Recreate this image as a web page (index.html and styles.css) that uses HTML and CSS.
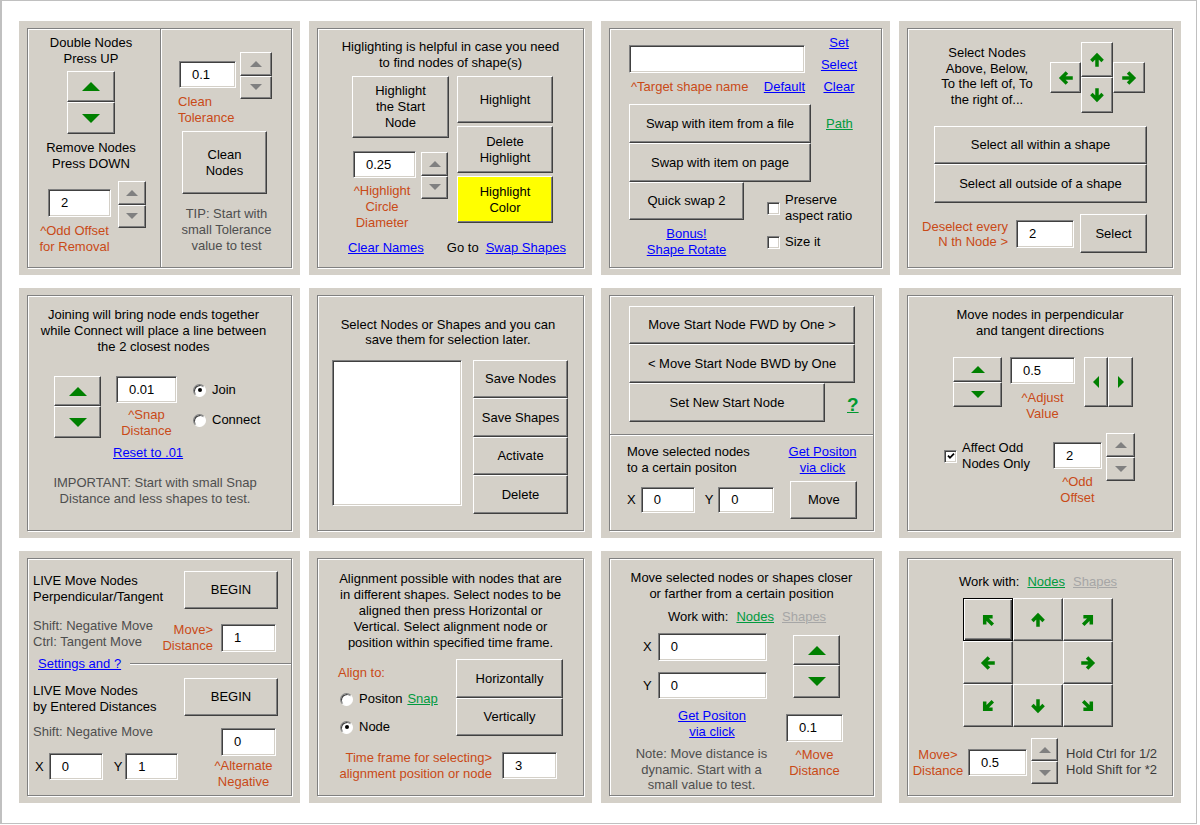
FILE: index.html
```html
<!DOCTYPE html>
<html lang="en">
<head>
<meta charset="utf-8">
<title>Node Tools</title>
<link rel="stylesheet" href="styles.css">
</head>
<body>
<div class="page">
<div class="grid">

<!-- 1 Double / Clean nodes -->
<section class="panel">
 <div class="frame p1">
  <div class="p1-left">
   <div class="nowrap center">Double Nodes<br>Press UP</div>
   <div class="p1-ud">
    <div class="btn p1-up"><span class="tu-l"></span></div>
    <div class="btn p1-dn"><span class="td-l"></span></div>
   </div>
   <div class="nowrap center p1-remove">Remove Nodes<br>Press DOWN</div>
   <div class="p1-offset">
    <div class="stack p1-stack">
     <div class="tb p1-tb-off">2</div>
     <div class="orange center nowrap p1-lbl-off">^Odd Offset<br>for Removal</div>
    </div>
    <div class="spin p1-spin-off">
     <div class="btn"><span class="tu-g"></span></div>
     <div class="btn"><span class="td-g"></span></div>
    </div>
   </div>
  </div>
  <div class="p1-right">
   <div class="p1-tol">
    <div class="stack-l p1-stack-tol">
     <div class="tb p1-tb-tol">0.1</div>
     <div class="orange nowrap p1-lbl-tol">Clean<br>Tolerance</div>
    </div>
    <div class="spin p1-spin-tol">
     <div class="btn"><span class="tu-g"></span></div>
     <div class="btn"><span class="td-g"></span></div>
    </div>
   </div>
   <div class="btn p1-clean">Clean<br>Nodes</div>
   <div class="gray center nowrap p1-tip">TIP: Start with<br>small Tolerance<br>value to test</div>
  </div>
 </div>
</section>

<!-- 2 Highlighting -->
<section class="panel">
 <div class="frame p2">
  <div class="center nowrap p2-head">Higlighting is helpful in case you need<br>to find nodes of shape(s)</div>
  <div class="p2-main">
   <div class="p2-left">
    <div class="btn p2-start">Highlight<br>the Start<br>Node</div>
    <div class="p2-dia">
     <div class="stack p2-stack">
      <div class="tb p2-tb">0.25</div>
      <div class="orange center nowrap p2-lbl">^Highlight<br>Circle<br>Diameter</div>
     </div>
     <div class="spin p2-spin">
      <div class="btn"><span class="tu-g"></span></div>
      <div class="btn"><span class="td-g"></span></div>
     </div>
    </div>
   </div>
   <div class="p2-right">
    <div class="btn p2-b">Highlight</div>
    <div class="btn p2-b">Delete<br>Highlight</div>
    <div class="btn p2-b yellow">Highlight<br>Color</div>
   </div>
  </div>
  <div class="p2-links nowrap">
   <a class="lnk" href="#">Clear Names</a>
   <span class="p2-goto">Go to</span>
   <a class="lnk p2-swap" href="#">Swap Shapes</a>
  </div>
 </div>
</section>

<!-- 3 Swap shapes -->
<section class="panel">
 <div class="frame p3">
  <div class="p3-top">
   <div class="p3-name">
    <div class="tb p3-tb"></div>
    <div class="p3-namerow nowrap">
     <span class="orange">^Target shape name</span>
     <a class="lnk" href="#">Default</a>
    </div>
   </div>
   <div class="p3-links">
    <a class="lnk" href="#">Set</a>
    <a class="lnk" href="#">Select</a>
    <a class="lnk" href="#">Clear</a>
   </div>
  </div>
  <div class="p3-row1">
   <div class="btn p3-wide nowrap">Swap with item from a file</div>
   <a class="glnk p3-path" href="#">Path</a>
  </div>
  <div class="btn p3-wide p3-page nowrap">Swap with item on page</div>
  <div class="p3-row3">
   <div class="p3-quick">
    <div class="btn p3-qs">Quick swap 2</div>
    <div class="center nowrap p3-bonus"><a class="lnk" href="#">Bonus!</a><br><a class="lnk" href="#">Shape Rotate</a></div>
   </div>
   <div class="p3-checks">
    <div class="chkrow"><span class="chk"></span><span class="nowrap">Preserve<br>aspect ratio</span></div>
    <div class="chkrow p3-size"><span class="chk"></span><span class="nowrap">Size it</span></div>
   </div>
  </div>
 </div>
</section>

<!-- 4 Select nodes -->
<section class="panel">
 <div class="frame p4">
  <div class="p4-top">
   <div class="center nowrap p4-desc">Select Nodes<br>Above, Below,<br>To the left of, To<br>the right of...</div>
   <div class="p4-cross">
    <div class="btn p4-side"><svg class="arr a-l" viewBox="0 0 12 12"><path d="M6 11.8V2M1.2 6.8 6 2l4.8 4.8"/></svg></div>
    <div class="p4-mid">
     <div class="btn p4-up"><svg class="arr" viewBox="0 0 12 12"><path d="M6 11.8V2M1.2 6.8 6 2l4.8 4.8"/></svg></div>
     <div class="btn p4-dn"><svg class="arr a-d" viewBox="0 0 12 12"><path d="M6 11.8V2M1.2 6.8 6 2l4.8 4.8"/></svg></div>
    </div>
    <div class="btn p4-side p4-right"><svg class="arr a-r" viewBox="0 0 12 12"><path d="M6 11.8V2M1.2 6.8 6 2l4.8 4.8"/></svg></div>
   </div>
  </div>
  <div class="btn p4-sel nowrap">Select all within a shape</div>
  <div class="btn p4-sel p4-sel2 nowrap">Select all outside of a shape</div>
  <div class="p4-bottom">
   <div class="orange nowrap p4-lbl">Deselect every<br>N th Node &gt;</div>
   <div class="tb p4-tb">2</div>
   <div class="btn p4-selbtn">Select</div>
  </div>
 </div>
</section>

<!-- 5 Join / Connect -->
<section class="panel">
 <div class="frame p5">
  <div class="center nowrap p5-head">Joining will bring node ends together<br>while Connect will place a line between<br>the 2 closest nodes</div>
  <div class="p5-mid">
   <div class="p5-ud">
    <div class="btn p5-up"><span class="tu-l"></span></div>
    <div class="btn p5-dn"><span class="td-l"></span></div>
   </div>
   <div class="stack p5-stack">
    <div class="tb p5-tb">0.01</div>
    <div class="orange center nowrap p5-lbl">^Snap<br>Distance</div>
   </div>
   <div class="p5-radios">
    <div class="radrow"><span class="radio on"></span><span>Join</span></div>
    <div class="radrow p5-conn"><span class="radio"></span><span>Connect</span></div>
   </div>
  </div>
  <div class="p5-reset"><a class="lnk" href="#">Reset to .01</a></div>
  <div class="center gray nowrap p5-imp">IMPORTANT: Start with small Snap<br>Distance and less shapes to test.</div>
 </div>
</section>

<!-- 6 Save selection -->
<section class="panel">
 <div class="frame p6">
  <div class="center nowrap p6-head">Select Nodes or Shapes and you can<br>save them for selection later.</div>
  <div class="p6-main">
   <div class="p6-list"></div>
   <div class="p6-btns">
    <div class="btn p6-b1">Save Nodes</div>
    <div class="btn p6-b2">Save Shapes</div>
    <div class="btn p6-b1">Activate</div>
    <div class="btn p6-b2">Delete</div>
   </div>
  </div>
 </div>
</section>

<!-- 7 Start node -->
<section class="panel narrow">
 <div class="frame p7">
  <div class="p7-btns">
   <div class="btn p7-b nowrap">Move Start Node FWD by One &gt;</div>
   <div class="btn p7-b p7-b2 nowrap">&lt; Move Start Node BWD by One</div>
   <div class="p7-row3">
    <div class="btn p7-set nowrap">Set New Start Node</div>
    <a class="qmark" href="#">?</a>
   </div>
  </div>
  <div class="rule p7-rule"></div>
  <div class="p7-info">
   <div class="nowrap p7-txt">Move selected nodes<br>to a certain positon</div>
   <div class="center nowrap p7-get"><a class="lnk" href="#">Get Positon</a><br><a class="lnk" href="#">via click</a></div>
  </div>
  <div class="p7-xy">
   <span>X</span>
   <div class="tb p7-tbx">0</div>
   <span class="p7-y">Y</span>
   <div class="tb p7-tby">0</div>
   <div class="btn p7-move">Move</div>
  </div>
 </div>
</section>

<!-- 8 Perpendicular / tangent -->
<section class="panel">
 <div class="frame p8">
  <div class="center nowrap p8-head">Move nodes in perpendicular<br>and tangent directions</div>
  <div class="p8-row">
   <div class="p8-ud">
    <div class="btn p8-ar"><span class="tu-s"></span></div>
    <div class="btn p8-ar"><span class="td-s"></span></div>
   </div>
   <div class="stack p8-stack">
    <div class="tb p8-tb">0.5</div>
    <div class="orange center nowrap p8-lbl">^Adjust<br>Value</div>
   </div>
   <div class="p8-lr">
    <div class="btn p8-l"><span class="tl"></span></div>
    <div class="btn p8-r"><span class="tr"></span></div>
   </div>
  </div>
  <div class="p8-row2">
   <div class="chkrow p8-chk">
    <span class="chk"><svg class="tick" viewBox="0 0 8 8"><path d="M1 3.6 3 5.8 7 1.6"/></svg></span>
    <span class="nowrap">Affect Odd<br>Nodes Only</span>
   </div>
   <div class="stack p8-stack2">
    <div class="tb p8-tb2">2</div>
    <div class="orange center nowrap p8-lbl2">^Odd<br>Offset</div>
   </div>
   <div class="spin p8-spin">
    <div class="btn"><span class="tu-g"></span></div>
    <div class="btn"><span class="td-g"></span></div>
   </div>
  </div>
 </div>
</section>

<!-- 9 LIVE move -->
<section class="panel">
 <div class="frame p9">
  <div class="p9-row1">
   <div class="nowrap p9-txt">LIVE Move Nodes<br>Perpendicular/Tangent</div>
   <div class="btn p9-begin">BEGIN</div>
  </div>
  <div class="p9-row2">
   <div class="gray nowrap p9-gray">Shift: Negative Move<br>Ctrl: Tangent Move</div>
   <div class="orange nowrap p9-mv">Move&gt;<br>Distance</div>
   <div class="tb p9-tb">1</div>
  </div>
  <div class="p9-row3">
   <a class="lnk nowrap p9-set" href="#">Settings and ?</a>
   <div class="rule p9-rule"></div>
  </div>
  <div class="p9-row1 p9-row4">
   <div class="nowrap p9-txt p9-txt2">LIVE Move Nodes<br>by Entered Distances</div>
   <div class="btn p9-begin">BEGIN</div>
  </div>
  <div class="p9-row5">
   <div class="p9-l">
    <div class="gray nowrap p9-gray">Shift: Negative Move</div>
    <div class="p9-xy">
     <span>X</span>
     <div class="tb p9-tbx">0</div>
     <span class="p9-y">Y</span>
     <div class="tb p9-tby">1</div>
    </div>
   </div>
   <div class="stack p9-stack">
    <div class="tb p9-tb">0</div>
    <div class="orange center nowrap p9-alt">^Alternate<br>Negative</div>
   </div>
  </div>
 </div>
</section>

<!-- 10 Alignment -->
<section class="panel">
 <div class="frame p10">
  <div class="center nowrap p10-head">Alignment possible with nodes that are<br>in different shapes. Select nodes to be<br>aligned then press Horizontal or<br>Vertical. Select alignment node or<br>position within specified time frame.</div>
  <div class="p10-main">
   <div class="p10-left">
    <div class="orange">Align to:</div>
    <div class="radrow p10-r1"><span class="radio"></span><span>Positon</span><a class="glnk p10-snap" href="#">Snap</a></div>
    <div class="radrow p10-r2"><span class="radio on"></span><span>Node</span></div>
   </div>
   <div class="p10-right">
    <div class="btn p10-h">Horizontally</div>
    <div class="btn p10-v">Vertically</div>
   </div>
  </div>
  <div class="p10-bottom">
   <div class="orange nowrap p10-lbl">Time frame for selecting&gt;<br>alignment position or node</div>
   <div class="tb p10-tb">3</div>
  </div>
 </div>
</section>

<!-- 11 Move closer / farther -->
<section class="panel narrow">
 <div class="frame p11">
  <div class="center nowrap p11-head">Move selected nodes or shapes closer<br>or farther from a certain position</div>
  <div class="work nowrap p11-work">Work with:<a class="glnk" href="#">Nodes</a><a class="dlnk" href="#">Shapes</a></div>
  <div class="p11-main">
   <div class="p11-left">
    <div class="p11-xy"><span>X</span><div class="tb p11-tb">0</div></div>
    <div class="p11-xy p11-yrow"><span>Y</span><div class="tb p11-tb p11-tby">0</div></div>
    <div class="center nowrap p11-get"><a class="lnk" href="#">Get Positon</a><br><a class="lnk" href="#">via click</a></div>
    <div class="center gray nowrap p11-note">Note: Move distance is<br>dynamic. Start with a<br>small value to test.</div>
   </div>
   <div class="p11-right">
    <div class="p11-ud">
     <div class="btn p11-up"><span class="tu-l"></span></div>
     <div class="btn p11-dn"><span class="td-l"></span></div>
    </div>
    <div class="stack p11-stack">
     <div class="tb p11-tbd">0.1</div>
     <div class="orange center nowrap p11-lbl">^Move<br>Distance</div>
    </div>
   </div>
  </div>
 </div>
</section>

<!-- 12 Direction pad -->
<section class="panel">
 <div class="frame p12">
  <div class="work nowrap p12-work">Work with:<a class="glnk" href="#">Nodes</a><a class="dlnk" href="#">Shapes</a></div>
  <div class="p12-pad">
   <div class="btn focus"><svg class="arr a-ul" viewBox="0 0 12 12"><path d="M6 11.8V2M1.2 6.8 6 2l4.8 4.8"/></svg></div>
   <div class="btn"><svg class="arr" viewBox="0 0 12 12"><path d="M6 11.8V2M1.2 6.8 6 2l4.8 4.8"/></svg></div>
   <div class="btn"><svg class="arr a-ur" viewBox="0 0 12 12"><path d="M6 11.8V2M1.2 6.8 6 2l4.8 4.8"/></svg></div>
   <div class="btn"><svg class="arr a-l" viewBox="0 0 12 12"><path d="M6 11.8V2M1.2 6.8 6 2l4.8 4.8"/></svg></div>
   <div class="p12-empty"></div>
   <div class="btn"><svg class="arr a-r" viewBox="0 0 12 12"><path d="M6 11.8V2M1.2 6.8 6 2l4.8 4.8"/></svg></div>
   <div class="btn"><svg class="arr a-dl" viewBox="0 0 12 12"><path d="M6 11.8V2M1.2 6.8 6 2l4.8 4.8"/></svg></div>
   <div class="btn"><svg class="arr a-d" viewBox="0 0 12 12"><path d="M6 11.8V2M1.2 6.8 6 2l4.8 4.8"/></svg></div>
   <div class="btn"><svg class="arr a-dr" viewBox="0 0 12 12"><path d="M6 11.8V2M1.2 6.8 6 2l4.8 4.8"/></svg></div>
  </div>
  <div class="p12-bottom">
   <div class="orange center nowrap p12-lbl">Move&gt;<br>Distance</div>
   <div class="tb p12-tb">0.5</div>
   <div class="spin p12-spin">
    <div class="btn"><span class="tu-g"></span></div>
    <div class="btn"><span class="td-g"></span></div>
   </div>
   <div class="dark nowrap p12-hold">Hold Ctrl for 1/2<br>Hold Shift for *2</div>
  </div>
 </div>
</section>

</div>
</div>
</body>
</html>
```

FILE: styles.css
```css
* { box-sizing: border-box; }

body {
  margin: 0;
  background: #fff;
  font-family: "Liberation Sans", Arial, sans-serif;
  font-size: 13px;
  line-height: 16px;
  color: #000;
}

.page {
  width: 1197px;
  height: 824px;
  border: 1px solid #c0c0c0;
  border-left-width: 2px;
  padding: 20px 0 0 17px;
}

.grid {
  display: grid;
  grid-template-columns: 281px 283px 289px 282px;
  grid-template-rows: 254px 250px 252px;
  column-gap: 9px;
  row-gap: 13px;
}

.panel {
  background: #d4d0c8;
  padding: 7px 8px;
}
.panel.narrow { margin-right: 8px; }

.frame {
  height: 100%;
  border: 1px solid #808080;
  box-shadow: inset 1px 1px 0 #fff, 1px 1px 0 #fff;
}

/* generic bits */
.nowrap { white-space: nowrap; }
.center { text-align: center; }
.orange { color: #c94a17; }
.gray { color: #4e4e4e; }
.dark { color: #3a3a3a; }

a { text-decoration: underline; }
.lnk { color: #0000ff; }
.glnk { color: #009a3e; }
.dlnk { color: #a6a6a6; }

.btn {
  display: flex;
  align-items: center;
  justify-content: center;
  text-align: center;
  flex-shrink: 0;
  background: #d4d0c8;
  border: 1px solid;
  border-color: #fff #404040 #404040 #fff;
  box-shadow: inset -1px -1px 0 #808080;
}
.btn.focus {
  border-color: #000;
  box-shadow: inset 1px 1px 0 #fff, inset -1px -1px 0 #404040, inset -2px -2px 0 #808080;
}
.yellow { background: #ffff00; }

.tb {
  display: flex;
  align-items: center;
  flex-shrink: 0;
  padding-left: 12px;
  background: #fff;
  border: 1px solid;
  border-color: #808080 #fff #fff #808080;
  box-shadow: inset 1px 1px 0 #404040, inset -1px -1px 0 #d4d0c8;
}

.spin { display: flex; flex-direction: column; flex-shrink: 0; }
.spin .btn { flex: 1; }

.stack { display: flex; flex-direction: column; align-items: center; flex-shrink: 0; }
.stack-l { display: flex; flex-direction: column; flex-shrink: 0; }

.rule { border-top: 1px solid #808080; border-bottom: 1px solid #fff; }

/* triangles */
.tu-l { width: 0; height: 0; border-left: 9px solid transparent; border-right: 9px solid transparent; border-bottom: 9px solid #008000; }
.td-l { width: 0; height: 0; border-left: 9px solid transparent; border-right: 9px solid transparent; border-top: 9px solid #008000; }
.tu-s { width: 0; height: 0; border-left: 7px solid transparent; border-right: 7px solid transparent; border-bottom: 7px solid #008000; }
.td-s { width: 0; height: 0; border-left: 7px solid transparent; border-right: 7px solid transparent; border-top: 7px solid #008000; }
.tu-g { width: 0; height: 0; border-left: 6px solid transparent; border-right: 6px solid transparent; border-bottom: 6px solid #808080; }
.td-g { width: 0; height: 0; border-left: 6px solid transparent; border-right: 6px solid transparent; border-top: 6px solid #808080; }
.tl { width: 0; height: 0; border-top: 6px solid transparent; border-bottom: 6px solid transparent; border-right: 6px solid #008000; }
.tr { width: 0; height: 0; border-top: 6px solid transparent; border-bottom: 6px solid transparent; border-left: 6px solid #008000; }

/* arrows */
.arr { width: 14px; height: 14px; display: block; overflow: visible; }
.arr path { fill: none; stroke: #008000; stroke-width: 3; }
.a-d { transform: rotate(180deg); }
.a-l { transform: rotate(-90deg); }
.a-r { transform: rotate(90deg); }
.a-ul { transform: rotate(-45deg); }
.a-ur { transform: rotate(45deg); }
.a-dl { transform: rotate(-135deg); }
.a-dr { transform: rotate(135deg); }

/* radio + checkbox */
.radrow { display: flex; align-items: center; }
.radio {
  width: 13px; height: 13px;
  margin-right: 6px;
  border-radius: 50%;
  background: #fff;
  border: 1px solid;
  border-color: #808080 #fff #fff #808080;
  box-shadow: inset 1px 1px 0 #404040;
  display: flex; align-items: center; justify-content: center;
  flex-shrink: 0;
}
.radio.on::after { content: ""; width: 4px; height: 4px; border-radius: 50%; background: #000; }

.chkrow { display: flex; align-items: center; gap: 5px; }
.chk {
  width: 13px; height: 13px;
  background: #fff;
  border: 1px solid;
  border-color: #808080 #fff #fff #808080;
  box-shadow: inset 1px 1px 0 #404040, inset -1px -1px 0 #d4d0c8;
  display: flex; align-items: center; justify-content: center;
  flex-shrink: 0;
}
.tick { width: 8px; height: 8px; display: block; }
.tick path { fill: none; stroke: #000; stroke-width: 1.8; }

.work a { margin-left: 8px; }

/* ---------- panel 1 ---------- */
.p1 { display: flex; }
.p1-left {
  width: 133px;
  border-right: 1px solid #808080;
  padding: 6px 6px 0 0;
  display: flex; flex-direction: column; align-items: center;
}
.p1-ud { margin-top: 4px; }
.p1-up { width: 48px; height: 31px; }
.p1-dn { width: 48px; height: 32px; }
.p1-remove { margin-top: 6px; }
.p1-offset { align-self: flex-start; margin: 9px 0 0 20px; display: flex; }
.p1-stack { width: 63px; }
.p1-tb-off { width: 63px; height: 28px; margin-top: 8px; }
.p1-lbl-off { margin: 6px 10px 0 0; }
.p1-spin-off { width: 28px; height: 47px; margin-left: 7px; }
.p1-right { flex: 1; border-left: 1px solid #fff; padding-top: 23px; }
.p1-tol { display: flex; margin-left: 17px; }
.p1-stack-tol { width: 57px; }
.p1-tb-tol { width: 57px; height: 27px; margin-top: 9px; }
.p1-lbl-tol { margin: 6px 0 0 -1px; }
.p1-spin-tol { width: 32px; height: 47px; margin-left: 4px; }
.p1-clean { width: 85px; height: 63px; margin: 5px 0 0 20px; }
.p1-tip { margin-top: 12px; }

/* ---------- panel 2 ---------- */
.p2-head { padding-top: 10px; }
.p2-main { display: flex; margin-top: 5px; }
.p2-left { margin-left: 34px; width: 97px; }
.p2-start { width: 97px; height: 62px; }
.p2-dia { display: flex; margin-top: 13px; }
.p2-stack { width: 63px; margin-left: 1px; }
.p2-tb { width: 63px; height: 27px; }
.p2-lbl { margin: 5px 5px 0 0; }
.p2-spin { width: 27px; height: 47px; margin: 1px 0 0 5px; }
.p2-right { margin-left: 8px; display: flex; flex-direction: column; gap: 3px; }
.p2-b { width: 96px; height: 47px; }
.p2-links { display: flex; margin: 9px 0 0 30px; }
.p2-goto { margin-left: 23px; }
.p2-swap { margin-left: 7px; }

/* ---------- panel 3 ---------- */
.p3-top { display: flex; }
.p3-name { margin-left: 19px; padding-top: 16px; width: 176px; }
.p3-tb { width: 176px; height: 28px; }
.p3-namerow { display: flex; justify-content: space-between; margin-top: 6px; padding-left: 2px; }
.p3-links {
  width: 60px; margin-left: 4px; padding-top: 3px;
  line-height: 22px;
  display: flex; flex-direction: column; align-items: center;
}
.p3-row1 { display: flex; align-items: center; margin: 6px 0 0 19px; }
.p3-wide { width: 182px; height: 39px; }
.p3-path { margin-left: 15px; }
.p3-page { margin-left: 19px; }
.p3-row3 { display: flex; margin-left: 19px; }
.p3-quick { display: flex; flex-direction: column; align-items: center; }
.p3-qs { width: 115px; height: 38px; }
.p3-bonus { margin-top: 6px; }
.p3-checks { margin: 10px 0 0 23px; }
.p3-size { margin-top: 10px; }

/* ---------- panel 4 ---------- */
.p4-top { display: flex; margin-top: 13px; }
.p4-desc { width: 110px; margin: 3px 0 0 24px; line-height: 15.5px; }
.p4-cross { display: flex; margin-left: 8px; }
.p4-side { width: 31px; height: 31px; margin-top: 20px; }
.p4-right { width: 32px; }
.p4-up { width: 32px; height: 35px; }
.p4-dn { width: 32px; height: 36px; }
.p4-sel { width: 213px; height: 38px; margin: 13px 0 0 26px; }
.p4-sel2 { height: 39px; margin-top: 0; }
.p4-bottom { display: flex; margin-top: 11px; }
.p4-lbl { width: 100px; text-align: right; margin-top: 5px; line-height: 15px; }
.p4-tb { width: 58px; height: 28px; margin: 6px 0 0 8px; }
.p4-selbtn { width: 67px; height: 39px; margin-left: 6px; }

/* ---------- panel 5 ---------- */
.p5-head { padding: 11px 12px 0 0; }
.p5-mid { display: flex; margin-top: 21px; }
.p5-ud { margin-left: 26px; }
.p5-up { width: 47px; height: 30px; }
.p5-dn { width: 47px; height: 32px; }
.p5-stack { width: 61px; margin-left: 15px; }
.p5-tb { width: 61px; height: 27px; }
.p5-lbl { margin-top: 4px; }
.p5-radios { margin: 6px 0 0 16px; }
.p5-conn { margin-top: 14px; }
.p5-reset { margin: 6px 0 0 85px; }
.p5-imp { margin-top: 14px; padding-right: 9px; }

/* ---------- panel 6 ---------- */
.p6-head { padding: 21px 5px 0 0; line-height: 15px; }
.p6-main { display: flex; margin-top: 13px; }
.p6-list {
  width: 130px; height: 146px; margin-left: 14px;
  background: #fff;
  border: 1px solid;
  border-color: #808080 #fff #fff #808080;
  box-shadow: inset 1px 1px 0 #404040, inset -1px -1px 0 #d4d0c8;
}
.p6-btns { margin-left: 11px; }
.p6-b1 { width: 95px; height: 38px; }
.p6-b2 { width: 95px; height: 39px; }

/* ---------- panel 7 ---------- */
.p7-btns { padding-top: 10px; margin-left: 19px; }
.p7-b { width: 226px; height: 38px; }
.p7-b2 { height: 39px; }
.p7-row3 { display: flex; align-items: center; }
.p7-set { width: 196px; height: 39px; }
.qmark {
  margin: 4px 0 0 22px;
  color: #00992e;
  font-size: 19px;
  line-height: 20px;
  font-weight: bold;
}
.p7-rule { margin-top: 12px; }
.p7-info { display: flex; margin-top: 8px; }
.p7-txt { margin-left: 17px; width: 150px; }
.p7-get { margin-left: 10px; width: 71px; }
.p7-xy { display: flex; align-items: center; margin: 5px 0 0 17px; }
.p7-tbx { width: 54px; height: 26px; margin-left: 5px; }
.p7-y { margin-left: 10px; }
.p7-tby { width: 56px; height: 26px; margin-left: 5px; }
.p7-move { width: 67px; height: 38px; margin-left: 16px; }

/* ---------- panel 8 ---------- */
.p8-head { padding-top: 11px; }
.p8-row { display: flex; margin-top: 18px; }
.p8-ud { margin-left: 45px; }
.p8-ar { width: 49px; height: 25px; }
.p8-stack { width: 65px; margin-left: 8px; }
.p8-tb { width: 65px; height: 27px; }
.p8-lbl { margin-top: 6px; line-height: 15.5px; }
.p8-lr { display: flex; margin-left: 9px; }
.p8-l { width: 24px; height: 50px; }
.p8-r { width: 25px; height: 50px; }
.p8-row2 { display: flex; margin-top: 12px; }
.p8-chk { width: 109px; margin: 7px 0 0 36px; align-self: flex-start; }
.p8-stack2 { width: 49px; margin-top: 9px; }
.p8-tb2 { width: 49px; height: 27px; }
.p8-lbl2 { margin-top: 5px; }
.p8-spin { width: 29px; height: 48px; margin-left: 4px; }

/* ---------- panel 9 ---------- */
.p9-row1 { display: flex; margin-top: 12px; }
.p9-txt { width: 151px; margin: 2px 0 0 5px; }
.p9-begin { width: 94px; height: 38px; }
.p9-row2 { display: flex; margin-top: 9px; }
.p9-gray { width: 120px; margin-left: 5px; }
.p9-mv { width: 60px; text-align: right; margin-top: 4px; line-height: 15.5px; }
.p9-tb { width: 55px; height: 28px; margin: 6px 0 0 8px; }
.p9-row3 { display: flex; align-items: center; margin-top: 3px; }
.p9-set { margin-left: 10px; }
.p9-rule { flex: 1; margin-left: 9px; }
.p9-row4 { margin-top: 6px; }
.p9-txt2 { margin-top: 5px; }
.p9-row5 { display: flex; margin-top: 8px; }
.p9-l { width: 193px; }
.p9-xy { display: flex; align-items: center; margin: 13px 0 0 7px; }
.p9-tbx { width: 54px; height: 27px; margin-left: 5px; }
.p9-y { margin-left: 11px; }
.p9-tby { width: 53px; height: 27px; margin-left: 3px; }
.p9-stack { width: 55px; }
.p9-stack .p9-tb { margin: 4px 0 0 0; }
.p9-alt { margin: 2px 10px 0 0; }

/* ---------- panel 10 ---------- */
.p10-head { padding-top: 12px; }
.p10-main { display: flex; margin-top: 8px; }
.p10-left { width: 118px; margin: 6px 0 0 20px; }
.p10-r1 { margin-top: 10px; }
.p10-r2 { margin-top: 12px; }
.p10-left .radio { margin-left: 2px; }
.p10-snap { margin-left: 5px; }
.p10-h { width: 107px; height: 39px; }
.p10-v { width: 107px; height: 38px; }
.p10-bottom { display: flex; margin-top: 14px; }
.p10-lbl { width: 172px; margin-left: 2px; text-align: right; }
.p10-tb { width: 55px; height: 27px; margin: 2px 0 0 10px; }

/* ---------- panel 11 ---------- */
.p11-head { padding: 11px 0 0 0; }
.p11-work { margin: 7px 0 0 58px; }
.p11-main { display: flex; margin-top: 8px; }
.p11-left { width: 176px; }
.p11-xy { display: flex; align-items: center; }
.p11-xy > span { margin-left: 33px; }
.p11-tb { width: 109px; height: 28px; margin-left: 6px; }
.p11-yrow { margin-top: 11px; }
.p11-tby { height: 27px; }
.p11-get { margin: 9px -7px 0 21px; line-height: 15.5px; }
.p11-note { margin: 7px -7px 0 0; line-height: 15.5px; }
.p11-ud { margin: 2px 0 0 7px; }
.p11-up { width: 47px; height: 30px; }
.p11-dn { width: 47px; height: 33px; }
.p11-stack { width: 57px; margin-top: 16px; }
.p11-tbd { width: 57px; height: 28px; }
.p11-lbl { margin-top: 5px; }

/* ---------- panel 12 ---------- */
.p12-work { padding-top: 15px; margin-left: 51px; }
.p12-pad {
  display: grid;
  grid-template-columns: repeat(3, 50px);
  grid-template-rows: repeat(3, 43px);
  width: 150px;
  margin: 8px 0 0 55px;
}
.p12-bottom { display: flex; margin-top: 11px; }
.p12-lbl { width: 60px; margin-top: 9px; }
.p12-tb { width: 59px; height: 27px; margin-top: 11px; }
.p12-spin { width: 27px; height: 46px; margin-left: 4px; }
.p12-hold { margin: 8px 0 0 8px; }
```
